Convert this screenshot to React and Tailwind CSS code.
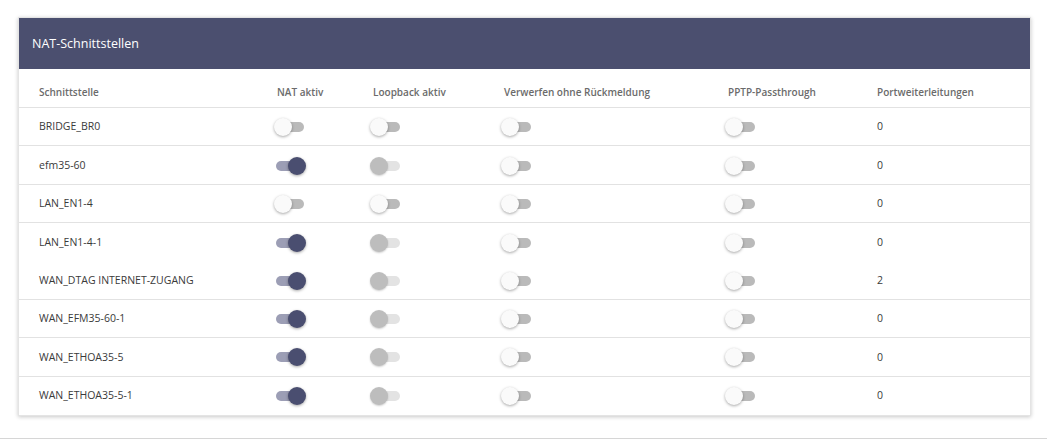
import React from "react";

const ROWS = [
  { name: "BRIDGE_BR0", nat: false, loopDisabled: false, fwd: 0 },
  { name: "efm35-60", nat: true, loopDisabled: true, fwd: 0 },
  { name: "LAN_EN1-4", nat: false, loopDisabled: false, fwd: 0 },
  { name: "LAN_EN1-4-1", nat: true, loopDisabled: true, fwd: 0, noLine: true },
  { name: "WAN_DTAG INTERNET-ZUGANG", nat: true, loopDisabled: true, fwd: 2 },
  { name: "WAN_EFM35-60-1", nat: true, loopDisabled: true, fwd: 0 },
  { name: "WAN_ETHOA35-5", nat: true, loopDisabled: true, fwd: 0 },
  { name: "WAN_ETHOA35-5-1", nat: true, loopDisabled: true, fwd: 0, last: true },
];

const COLS = "grid grid-cols-[238px_96px_131px_224px_149px_1fr] items-center px-5";

function Toggle({ on, disabled }) {
  let track = "bg-[#bababa]";
  let knob = "bg-[#fafafa] left-0 shadow-[0_1px_3px_rgba(0,0,0,0.35)]";
  if (on) {
    track = "bg-[#9c9eb5]";
    knob = "bg-[#4a4e70] left-[14px] shadow-[0_1px_3px_rgba(0,0,0,0.35)]";
  } else if (disabled) {
    track = "bg-[#e3e3e3]";
    knob = "bg-[#bdbdbd] left-0 shadow-[0_1px_2px_rgba(0,0,0,0.2)]";
  }
  return (
    <span className="relative block w-[32px] h-[18px] -ml-[3px]">
      <span className={`absolute left-[2px] top-[4px] w-[28px] h-[10px] rounded-full ${track}`} />
      <span className={`absolute top-0 w-[18px] h-[18px] rounded-full ${knob}`} />
    </span>
  );
}

export default function App() {
  return (
    <div className="w-[1047px] h-[447px] bg-white font-['Open_Sans',sans-serif] pt-[17px]">
      <div className="ml-[18px] w-[1013px] bg-white border border-[#e4e4e4] shadow-[0_1px_4px_rgba(0,0,0,0.22)]">
        <div className="h-[51px] bg-[#4b4f6f] flex items-center px-[13px] pt-[1px]">
          <h1 className="text-[12.5px] text-white">NAT-Schnittstellen</h1>
        </div>
        <div className={`${COLS} h-[39px] pt-[9px] border-b border-[#e2e2e2] text-[10px] font-semibold text-[#6b6b6b]`}>
          <span>Schnittstelle</span>
          <span>NAT aktiv</span>
          <span>Loopback aktiv</span>
          <span>Verwerfen ohne Rückmeldung</span>
          <span>PPTP-Passthrough</span>
          <span>Portweiterleitungen</span>
        </div>
        {ROWS.map((r) => (
          <div
            key={r.name}
            className={`${COLS} h-[38.375px] pt-[1px] text-[10.5px] text-[#3a3a3a] ${
              r.noLine || r.last ? "" : "border-b border-[#e2e2e2]"
            }`}
          >
            <span>{r.name}</span>
            <Toggle on={r.nat} />
            <Toggle on={false} disabled={r.loopDisabled} />
            <Toggle on={false} />
            <Toggle on={false} />
            <span>{r.fwd}</span>
          </div>
        ))}
      </div>
      <div className="mt-[22px] border-t border-[#d6d6d6]" />
    </div>
  );
}
